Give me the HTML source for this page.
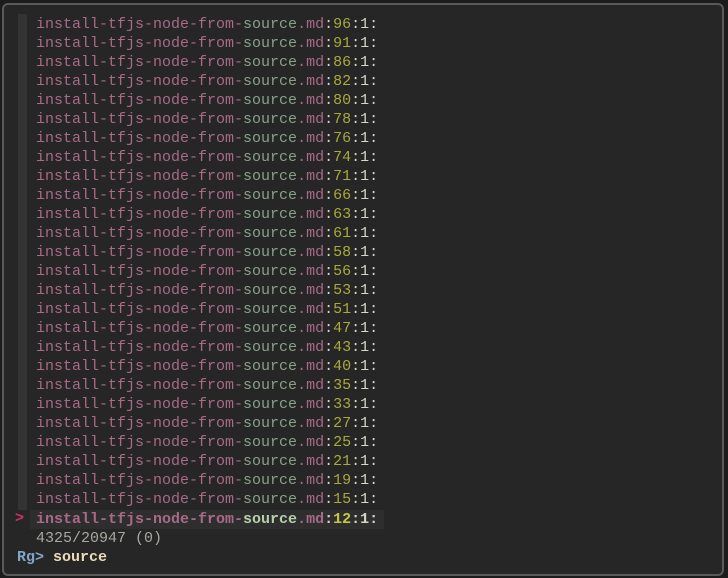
<!DOCTYPE html><html><head><style>
body{margin:0;background:#1c1c1c;width:728px;height:578px;overflow:hidden}
.f{position:absolute;left:2px;top:3px;width:718px;height:569px;border:2px solid #5a5a5a;border-radius:6px;background:#262626}
.g{position:absolute;left:18px;top:14px;width:9px;height:496px;background:#333}
.l{position:absolute;left:36px;font:15px/19px "Liberation Mono",monospace;white-space:pre;color:#a86a86}
.s{color:#8aa08a}.n{color:#a8aa3a}.w{color:#d8d6c8}
.sel{position:absolute;left:30px;top:510px;width:354px;height:19px;background:#2e2e2e}
</style></head><body><div class="f"></div><div class="g"></div><div class="sel"></div>
<div id="c"></div>
<script>
var n=[96,91,86,82,80,78,76,74,71,66,63,61,58,56,53,51,47,43,40,35,33,27,25,21,19,15],h='';
n.forEach(function(v,i){h+='<div class="l" style="top:'+(15+i*19)+'px">install-tfjs-node-from-<span class="s">source</span>.md<span class="w">:</span><span class="n">'+v+'</span><span class="w">:1:</span></div>';});
document.getElementById('c').innerHTML=h;
</script>
<div class="l" style="top:509px;left:15px;color:#d0306a;font-weight:bold">&gt;</div>
<div class="l" style="top:510px;font-weight:bold">install-tfjs-node-from-<span class="s" style="color:#b8d0a8">source</span>.md<span class="w">:</span><span class="n" style="color:#c8c840">12</span><span class="w">:1:</span></div>
<div class="l" style="top:529px;color:#a8a8a0">4325/20947 (0)</div>
<div class="l" style="top:548px;left:17px;color:#83a5c8;font-weight:bold">Rg&gt; <span style="color:#ecdcb8">source</span></div>
</body></html>
